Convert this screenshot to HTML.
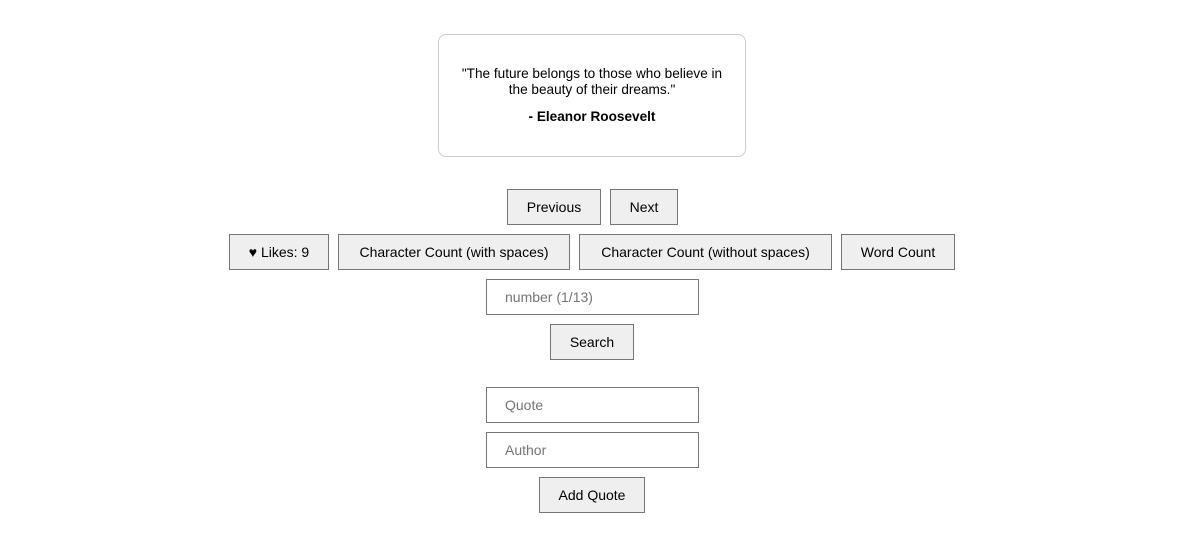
<!DOCTYPE html>
<html><head><meta charset="utf-8"><style>
body{margin:0;width:1189px;height:556px;background:#fff;font-family:"Liberation Sans",sans-serif;position:relative;overflow:hidden}
.a{position:absolute;box-sizing:border-box}
.card{left:438px;top:34px;width:308px;height:123px;border:1px solid #ccc;border-radius:8px;text-align:center;font-size:14px;color:#000}
.b{background:#efefef;border:1px solid #767676;font-size:14px;color:#000;text-align:center;line-height:34px;height:36px}
.i{background:#fff;border:1px solid #767676;font-size:14px;color:#757575;line-height:34px;height:36px;padding-left:18px}
</style></head><body>
<div class="a card"><div style="position:absolute;left:0;right:0;top:31px;line-height:16px;font-size:13.6px">"The future belongs to those who believe in<br>the beauty of their dreams."</div><div style="position:absolute;left:0;right:0;top:74px;font-weight:bold;font-size:13.6px">- Eleanor Roosevelt</div></div>
<div class="a b" style="left:507px;top:189px;width:94px">Previous</div>
<div class="a b" style="left:610px;top:189px;width:68px">Next</div>
<div class="a b" style="left:229px;top:234px;width:100px">♥ Likes: 9</div>
<div class="a b" style="left:338px;top:234px;width:232px">Character Count (with spaces)</div>
<div class="a b" style="left:579px;top:234px;width:253px">Character Count (without spaces)</div>
<div class="a b" style="left:841px;top:234px;width:114px">Word Count</div>
<div class="a i" style="left:486px;top:279px;width:213px">number (1/13)</div>
<div class="a b" style="left:550px;top:324px;width:84px">Search</div>
<div class="a i" style="left:486px;top:387px;width:213px">Quote</div>
<div class="a i" style="left:486px;top:432px;width:213px">Author</div>
<div class="a b" style="left:539px;top:477px;width:106px">Add Quote</div>
</body></html>
